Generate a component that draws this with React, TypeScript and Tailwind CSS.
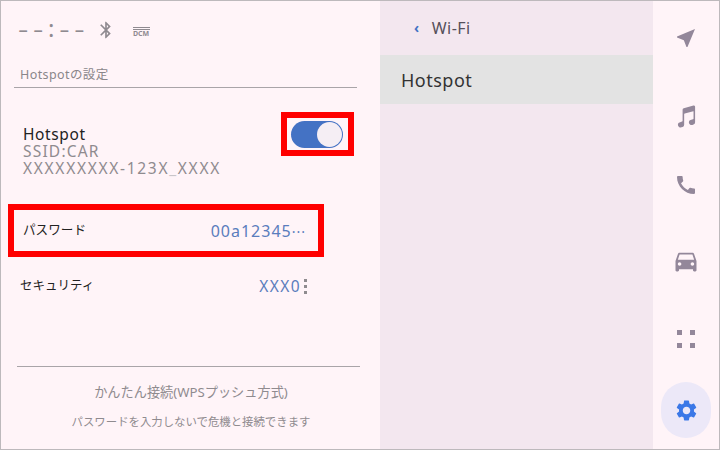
import { MdBluetooth, MdNearMe, MdCall, MdDirectionsCar, MdSettings } from 'react-icons/md'
import { IoMusicalNotes } from 'react-icons/io5'

const font = { fontFamily: '"Noto Sans", "Noto Sans CJK JP", sans-serif' }

function StatusBar() {
  return (
    <div className="flex h-[66px] items-start pl-[17px] pt-[14px] text-[#8f8a90]">
      <span className="flex h-[26px] w-[78px] items-center whitespace-nowrap text-[32px] font-light leading-[26px] tracking-[4.7px]">
        --<span className="text-[24px] font-normal">:</span>--
      </span>
      <MdBluetooth className="mt-[5px]" size={20} />
      <div className="ml-[17px] mt-[12px] flex w-[17px] flex-col">
        <div className="h-[1px] bg-[#8f8a90]" />
        <div className="mt-[1px] h-[1px] bg-[#8f8a90]" />
        <span className="text-[7px] leading-[8px] font-bold">DCM</span>
      </div>
    </div>
  )
}

function Toggle() {
  return (
    <div className="border-[6px] border-[#ff0000] pb-[2px] pl-[4px] pr-[5px] pt-[3px]">
      <div className="flex h-[27px] w-[52px] items-center justify-end rounded-full bg-[#4472c4] pr-[1px]">
        <div className="h-[25px] w-[25px] rounded-full bg-[#f5eef4]" />
      </div>
    </div>
  )
}

export default function App() {
  return (
    <div style={font} className="flex h-[450px] w-[720px] overflow-hidden border border-[#bdb9bc] bg-[#fff4f8]">
      <div className="flex w-[379px] shrink-0 flex-col">
        <StatusBar />
        <div className="ml-[13px] mr-[23px] h-[21px] border-b border-[#a9a4a8] pl-[6px] text-[12.5px] leading-[16px] tracking-[0.4px] text-[#8a868a]">
          Hotspotの設定
        </div>
        <div className="mt-[24px] flex items-start justify-between pl-[22px] pr-[26px]">
          <div className="pt-[14px]">
            <div className="text-[15.5px] leading-[17px] tracking-[0.6px] text-[#222]">Hotspot</div>
            <div className="text-[15.5px] leading-[17px] tracking-[1.2px] text-[#8f8b8f]">SSID:CAR</div>
            <div className="text-[15.5px] leading-[16px] tracking-[1.7px] text-[#8f8b8f]">
              XXXXXXXXX-123X<span className="text-[#c9c5c9]">_</span>XXXX
            </div>
          </div>
          <Toggle />
        </div>
        <div className="ml-[7px] mt-[28px] flex h-[53px] w-[316px] items-center justify-between border-[6px] border-[#ff0000] pl-[9px] pr-[12px]">
          <span className="text-[12.6px] text-[#222]">パスワード</span>
          <span className="text-[16px] tracking-[1px] text-[#5a7dbd]">
            00a12345<span className="text-[14px] tracking-[1px]">···</span>
          </span>
        </div>
        <div className="mt-[17px] flex items-center justify-between pl-[19px] pr-[73px]">
          <span className="text-[12.5px] leading-[24px] text-[#222]">セキュリティ</span>
          <div className="flex items-center">
            <span className="text-[15.5px] leading-[24px] tracking-[1.4px] text-[#5a7dbd]">XXX0</span>
            <div className="ml-[3px] flex flex-col gap-[3px]">
              <div className="h-[3px] w-[3px] bg-[#8f8b8f]" />
              <div className="h-[3px] w-[3px] bg-[#8f8b8f]" />
              <div className="h-[3px] w-[3px] bg-[#8f8b8f]" />
            </div>
          </div>
        </div>
        <div className="ml-[16px] mr-[20px] mt-[68px] border-t border-[#a9a4a8] pl-[5px] pt-[16px] text-center">
          <div className="text-[13.2px] leading-[18px] text-[#8f8b8f]">かんたん接続(WPSプッシュ方式)</div>
          <div className="mt-[12px] text-[11.4px] leading-[18px] text-[#8f8b8f]">パスワードを入力しないで危機と接続できます</div>
        </div>
      </div>

      <div className="flex w-[273px] shrink-0 flex-col bg-[#f3e7ef]">
        <div className="flex h-[54px] items-center pl-[34px] text-[16px] tracking-[0.5px] text-[#55505a]">
          <span className="mr-[12px] text-[14px] font-bold leading-none text-[#4472c4]">‹</span>
          Wi-Fi
        </div>
        <div className="flex h-[49px] items-center bg-[#e3e3e3] pl-[21px] pt-[2px] text-[18px] tracking-[0.5px] text-[#333]">Hotspot</div>
      </div>

      <div className="flex flex-1 flex-col items-center pt-[25px] text-[#93879a]">
        <MdNearMe size={24} />
        <IoMusicalNotes size={25} className="mt-[54px]" />
        <MdCall size={24} className="mt-[44px]" />
        <MdDirectionsCar size={28} className="mt-[50px]" />
        <div className="mt-[55px] grid grid-cols-2 gap-x-[8px] gap-y-[8px]">
          <div className="h-[5px] w-[5px] bg-[#93879a]" />
          <div className="h-[5px] w-[5px] bg-[#93879a]" />
          <div className="h-[5px] w-[5px] bg-[#93879a]" />
          <div className="h-[5px] w-[5px] bg-[#93879a]" />
        </div>
        <div className="mt-[34px] flex h-[56px] w-[50px] shrink-0 items-center justify-center rounded-full bg-[#ece8f8]">
          <MdSettings size={25} className="text-[#3b78e7]" />
        </div>
      </div>
    </div>
  )
}
